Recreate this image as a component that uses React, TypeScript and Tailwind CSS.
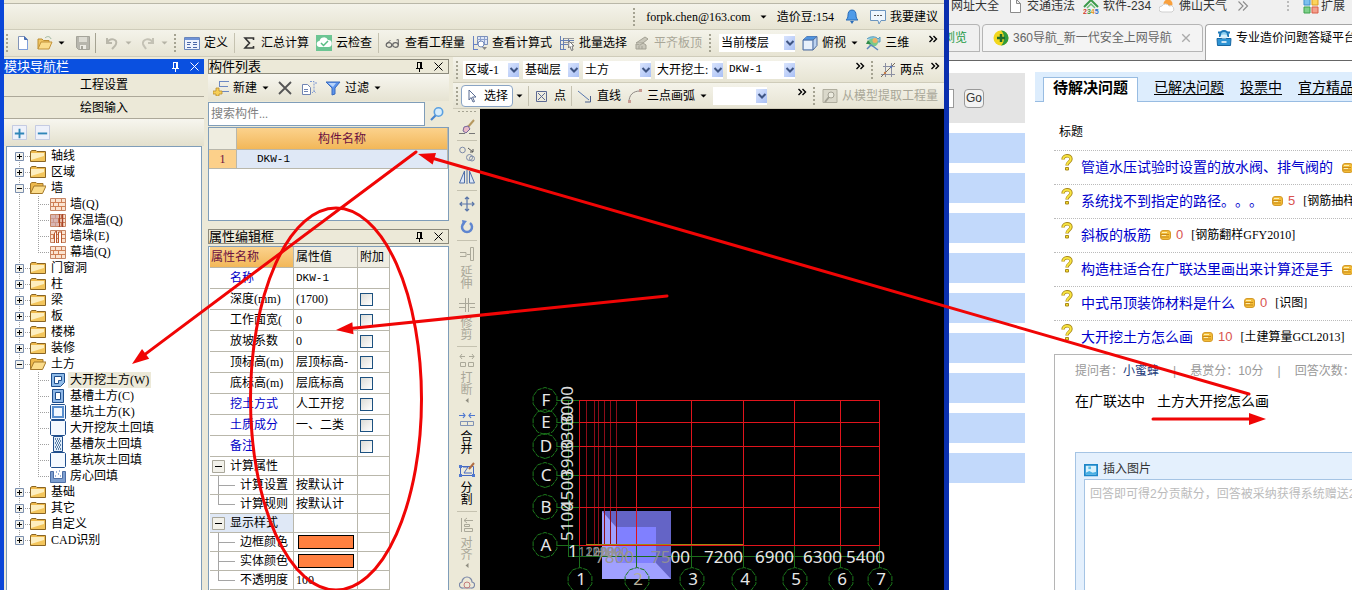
import React from "react"

type IconProps = { children: React.ReactNode; className?: string }

function Icon({ children, className = "h-4 w-4" }: IconProps) {
  return (
    <svg viewBox="0 0 16 16" fill="none" className={`shrink-0 ${className}`} aria-hidden="true">
      {children}
    </svg>
  )
}

/* ---------- Small shared pieces ---------- */

function Caret({ muted = false }: { muted?: boolean }) {
  return (
    <svg viewBox="0 0 8 8" className="h-2 w-2 shrink-0" aria-hidden="true">
      <path d="M1.500 2.500h6l-3 3z" fill={muted ? "#b5b3a6" : "#000"} />
    </svg>
  )
}

function Grip() {
  return (
    <svg viewBox="0 0 3 18" className="h-[18px] w-[3px] shrink-0" aria-hidden="true">
      {[0, 4, 8, 12, 16].map((y) => (
        <rect key={y} x="0" y={y} width="2" height="2" fill="#a5a392" />
      ))}
    </svg>
  )
}

function Sep() {
  return <span className="-mx-px h-5 w-px shrink-0 bg-[#c5c2b0]" />
}

function More() {
  return (
    <button type="button" aria-label="更多" className="-mt-2 shrink-0">
      <svg viewBox="0 0 10 8" className="h-2 w-[10px]" fill="none" aria-hidden="true">
        <path d="M1.5 1l3 3-3 3M5.5 1l3 3-3 3" stroke="#000" strokeWidth="1.4" />
      </svg>
    </button>
  )
}

type ToolProps = { icon: React.ReactNode; label: string; disabled?: boolean; caret?: boolean }

function Tool({ icon, label, disabled, caret }: ToolProps) {
  return (
    <button type="button" disabled={disabled} className="flex shrink-0 items-center gap-1 disabled:text-[#a9a798]">
      {icon}
      <span>{label}</span>
      {caret && <Caret />}
    </button>
  )
}

function Combo({ label, value, className }: { label: string; value: string; className: string }) {
  return (
    <div className={`relative h-[18px] shrink-0 bg-white ${className}`}>
      <select aria-label={label} className="h-full w-full appearance-none truncate pr-3 pl-0.5 outline-none">
        <option>{value}</option>
      </select>
      <span className="pointer-events-none absolute inset-y-0.5 right-0 flex w-[11px] items-center justify-center bg-gradient-to-br from-[#d9e4fd] to-[#a9c0f5]">
        <svg viewBox="0 0 10 8" className="h-2 w-[10px]" fill="none" aria-hidden="true">
          <path d="M1.5 2l3.5 3.5L8.500 2" stroke="#3f5583" strokeWidth="2" />
        </svg>
      </span>
    </div>
  )
}

/* ---------- Icons ---------- */

const newIcon = (
  <Icon>
    <path d="M3.500 1.500h6l3 3v10h-9z" fill="#fff" stroke="#8294b8" />
    <path d="M9.500 1.500v3h3" fill="#4472c4" stroke="#4a6cab" />
    <path d="M12.500 6v8.500H5" stroke="#7f9fdc" />
  </Icon>
)
const openIcon = (
  <Icon>
    <path d="M1 14V4h4l1.500 1.500H12V8" fill="#f1c663" stroke="#bd8e32" />
    <path d="M1 14l3-7h11l-3 7z" fill="#fbdd8c" stroke="#c3933a" />
    <path d="M8 3c2-2 5-2 6 1" stroke="#9db6a0" />
  </Icon>
)
const saveIcon = (
  <Icon>
    <path d="M1.500 1.500h13v13h-11l-2-2z" fill="#b7b6ad" stroke="#a5a49a" />
    <path d="M4 2h8v5H4z" fill="#dddcd3" />
    <path d="M5 10h6v4H5z" fill="#ecebe4" />
    <path d="M6 11h2v3H6z" fill="#a5a49a" />
  </Icon>
)
const undoIcon = (
  <Icon>
    <path d="M3 3v5h5" stroke="#bab8ab" strokeWidth="2" />
    <path d="M3 8c3-6 11-4 9 1-.5 2-2 3-4 5" stroke="#bab8ab" strokeWidth="2" />
  </Icon>
)
const redoIcon = (
  <Icon>
    <path d="M13 3v5H8" stroke="#c4c2b5" strokeWidth="2" />
    <path d="M13 8C10 2 2 4 3 9c.5 2 2 3 3 5" stroke="#c4c2b5" strokeWidth="2" />
  </Icon>
)
const defineIcon = (
  <Icon>
    <path d="M.5 2.500h15v12H.500z" fill="#eef3fd" stroke="#6a86bb" />
    <path d="M1 3h14v2H1z" fill="#6f93d6" />
    <path d="M3 7.500h4M3 9.500h3M3 12.500h4M9 7.500h4M9 9.500h4M9 12.500h4" stroke="#4b68a8" />
  </Icon>
)
const sigmaIcon = (
  <Icon>
    <path d="M12.500 5V3H4l4.500 5L4 13h8.500v-2" stroke="#333" strokeWidth="1.600" />
  </Icon>
)
const cloudCheckIcon = (
  <Icon>
    <path d="M0 0h16v16H0z" fill="#6cc593" />
    <path d="M4 12a3 3 0 01-.5-6A4.500 4.500 0 0112 5a3.500 3.500 0 01.5 7z" fill="#fff" />
    <path d="M5 8l2.500 2.500L12 6" stroke="#58bd83" strokeWidth="1.500" />
  </Icon>
)
const glassesIcon = (
  <Icon>
    <ellipse cx="4" cy="10" rx="2.800" ry="2.300" stroke="#666" strokeWidth="1.200" />
    <ellipse cx="10.500" cy="10" rx="2.800" ry="2.300" stroke="#666" strokeWidth="1.200" />
    <path d="M1.500 9l4-4M13.300 10V4.500L11.500 5" stroke="#666" />
  </Icon>
)
const formulaIcon = (
  <Icon>
    <path d="M1.500 1v14M1 9.500h5M1 14.500h5" stroke="#6681c5" />
    <path d="M5.500 1.500h10v8h-10z" fill="#dfe7f7" stroke="#7b8fb9" />
    <path d="M5 4.500h10M8.500 2v7M12.500 2v7" stroke="#8da1cd" />
    <circle cx="9" cy="9" r="3" fill="#fff" stroke="#7189bb" />
    <path d="M10 12h5l-2.500 3z" fill="#888" />
  </Icon>
)
const batchIcon = (
  <Icon>
    <path d="M1.500 1v14M4.500 3v12M1 14.500h6M1 5.500h14M1 9.500h8M9.500 3v5" stroke="#6681b5" />
    <path d="M5 3.500h10M5 7.500h10" stroke="#9a9a9a" />
    <path d="M10 6l5 5h-2l1 4-1.500.5-1.500-4-1.500 1.500z" fill="#fff" stroke="#777" />
  </Icon>
)
const slabIcon = (
  <Icon>
    <path d="M2 8l9-6 3 2-5 4zM2 9v5h10v-4l-3-2-3 2zM5 11v3M8 11v3" fill="#c9c7ba" stroke="#a3a194" />
  </Icon>
)
const cubeIcon = (
  <Icon>
    <path d="M1 5l4-3.500h10v9l-4 4.500H1z" fill="#bcd2ef" stroke="#4f6d9e" />
    <path d="M1 5l4-3.500h10L11 5z" fill="#4e93df" />
    <path d="M1 5h10v10M11 5l4-3.500" stroke="#4f6d9e" />
    <path d="M2 6h8v8H2z" fill="#e8f0fb" />
  </Icon>
)
const orbitIcon = (
  <Icon>
    <path d="M2 4c3-3 9-3 11 0l2-2v5h-4" fill="#8cc7e0" stroke="#5a9dbd" />
    <ellipse cx="8" cy="7.500" rx="5" ry="4" fill="#7cc98a" />
    <circle cx="10" cy="5.500" r="2.500" fill="#efb166" />
    <path d="M1 9l2-4 3 4z" fill="#2f8b4a" />
    <path d="M2 14l4-4 3 2 4 3" stroke="#5a86c0" strokeWidth="1.500" />
  </Icon>
)
const bellIcon = (
  <Icon>
    <path d="M8 1c3 0 4 2.500 4 5 0 3 1 4 2 5H2c1-1 2-2 2-5 0-2.500 1-5 4-5z" fill="#4f9be8" stroke="#2a6db8" />
    <path d="M6 12h4l-2 3z" fill="#2a6db8" />
  </Icon>
)
const chatIcon = (
  <Icon>
    <path d="M.5 1.500h15v10H11L9 15l-1-3.500H.500z" fill="#eef6fd" stroke="#6b95bf" />
    <path d="M4 6.500h8" stroke="#555" strokeDasharray="2 1" />
  </Icon>
)
const twoPointIcon = (
  <Icon>
    <path d="M1 12.500h14M3 4.500h12M5.500 1v14M11.500 1v14" stroke="#8b8fa2" />
    <path d="M1 15L15 1" stroke="#7a6b5a" />
    <circle cx="5" cy="11" r="1.200" fill="#c67c47" />
    <circle cx="11" cy="5" r="1.200" fill="#5877b5" />
  </Icon>
)
const pointIcon = (
  <Icon>
    <path d="M2.500 3.500h10v10h-10zM4 5l7 7M11 5l-7 7" stroke="#5d6a94" />
  </Icon>
)
const lineIcon = (
  <Icon>
    <path d="M1 3l11 9" stroke="#5878b0" />
    <path d="M13.500 8v6H8" stroke="#4a5e8a" />
  </Icon>
)
const arcIcon = (
  <Icon>
    <path d="M2 14C2 7 6 3 13 3" stroke="#8d8783" />
    <path d="M1 12h3v3H1zM12 1h3v3h-3z" fill="#c89b92" />
  </Icon>
)
const extractIcon = (
  <Icon>
    <path d="M1 1.500h14v13H1z" stroke="#b0ae9f" fill="#dad8ca" />
    <circle cx="9" cy="7" r="3" fill="#ecebdf" stroke="#a3a194" />
    <path d="M7 9l-4 5" stroke="#a3a194" strokeWidth="2" />
  </Icon>
)
const createIcon = (
  <Icon>
    <path d="M6 1.500h10M6 6.500h9M8 11.500h8M6.500 1v6" stroke="#6c88c2" />
    <path d="M3 8h3v3h3v3H6v2H3v-2H0v-3h3z" fill="#f7cf57" stroke="#b98d2e" strokeWidth=".8" />
  </Icon>
)
const deleteIcon = (
  <Icon>
    <path d="M2 2l12 12M14 2L2 14" stroke="#555" strokeWidth="1.800" />
  </Icon>
)
const copyDocIcon = (
  <Icon>
    <path d="M1.500 4.500h5l3 3v7h-8z" fill="#fff" stroke="#7085b3" />
    <path d="M3 9.500h4M3 11.500h4" stroke="#7085b3" />
    <path d="M9 1.500h4v10M11 13l2-2 2 2M14 3h2" stroke="#7c98d3" strokeDasharray="2 1" />
  </Icon>
)
const filterIcon = (
  <Icon>
    <path d="M1 2h14L10 8v6l-3 1V8z" fill="#5b93ec" stroke="#3a6bbd" />
    <path d="M3 3h8L8 7z" fill="#b8d4fa" />
  </Icon>
)
const searchIcon = (
  <Icon>
    <circle cx="9.500" cy="6" r="4.200" fill="#d7edfb" stroke="#5ba0e0" strokeWidth="1.600" />
    <path d="M6.500 9.500L2 14" stroke="#4584cf" strokeWidth="2.200" />
  </Icon>
)
const pictureIcon = (
  <Icon className="h-[14px] w-[14px]">
    <path d="M1 2h14v12H1z" fill="#d8f1fc" stroke="#1c86c9" strokeWidth="2" />
    <path d="M2 11l4-2 4 2 4-1v3H2z" fill="#48b0e4" />
    <path d="M5 4h3v3H5z" fill="#5cc0ea" />
  </Icon>
)

/* ---------- Module tree ---------- */

const folderIcon = (
  <Icon>
    <path d="M.5 3.500L2 2.500h4l1 1h8.500v10H.500z" fill="#eeb94d" stroke="#8a6524" />
    <path d="M1 5h14v8H1z" fill="#f3c55c" />
    <path d="M1 5h13v3L1 12z" fill="#fdeebf" />
  </Icon>
)
const folderOpenIcon = (
  <Icon>
    <path d="M.5 13.500v-10L2 2.500h4l1 1h6V6" fill="#eeb94d" stroke="#a4782a" />
    <path d="M.5 13.500L4 6h12l-3.500 7.500z" fill="#fbdc8b" stroke="#a4782a" />
  </Icon>
)
const brick = (
  <>
    <path d="M.5 2.500h15v12H.500z" fill="#fbe3d0" stroke="#c58565" />
    <path d="M1 6.500h14M1 10.500h14M5.500 3v4M11.500 3v4M8.500 7v4M3.500 7v4M5.500 11v3M11.500 11v3" stroke="#cf7f55" />
  </>
)
const frame = <path d="M1.500.500h13l1 1v13l-1 1h-13l-1-1v-13z" fill="#f4f9ff" stroke="#1f4e8c" />

const leafIcons: Record<string, React.ReactNode> = {
  brick: <Icon>{brick}</Icon>,
  insulated: (
    <Icon>
      {brick}
      <path d="M1 3h7v11H1z" fill="#c9a2a6" fillOpacity=".7" />
      <path d="M9.500 2v13M12.500 2v13" stroke="#a8452c" strokeWidth="1.500" />
    </Icon>
  ),
  pier: (
    <Icon>
      {brick}
      <path d="M4.500 15V5l2-2v12M8.500 15V4h3v11" fill="#fff" stroke="#b8582f" />
    </Icon>
  ),
  excavate: (
    <Icon>
      <path d="M1.500 1.500h13v9l-4 4h-9z" fill="#8fbbe8" stroke="#1f4e8c" />
      <path d="M4.500 4.500h7v4h-3v3h-4z" fill="#fff" stroke="#1f4e8c" />
    </Icon>
  ),
  trench: (
    <Icon>
      <path d="M2.500 1.500h11v13h-11z" fill="#8fb7e6" stroke="#1f4e8c" />
      <path d="M5.500 4.500h5v7h-5z" fill="#fff" stroke="#1f4e8c" />
    </Icon>
  ),
  pit: (
    <Icon>
      {frame}
      <path d="M3 3h10v10H3z" stroke="#5a8fce" strokeWidth="2" />
    </Icon>
  ),
  backfill: <Icon>{frame}</Icon>,
  trenchFill: (
    <Icon>
      <path d="M3.500.500h9v15h-9z" fill="#e2eefb" stroke="#1f4e8c" />
      <path d="M5 3h6M6 5h6M5 7h6M6 9h6M5 11h6M6 13h6" stroke="#35608f" strokeWidth="1.500" strokeDasharray="1 1" />
    </Icon>
  ),
  roomFill: (
    <Icon>
      <path d="M.5 3.500h3v7h9v-7h3v11H.500z" fill="#7d9fd0" stroke="#4d6ea5" />
      <path d="M5 8h1M8 6h1M10 8h1M6 4h1M9 3h1" stroke="#7d9fd0" strokeWidth="1.500" />
    </Icon>
  ),
}

type Leaf = { label: string; icon: string; active?: boolean }
type Branch = { label: string; children?: Leaf[] }

const tree: Branch[] = [
  { label: "轴线" },
  { label: "区域" },
  {
    label: "墙",
    children: [
      { label: "墙(Q)", icon: "brick" },
      { label: "保温墙(Q)", icon: "insulated" },
      { label: "墙垛(E)", icon: "pier" },
      { label: "幕墙(Q)", icon: "brick" },
    ],
  },
  { label: "门窗洞" },
  { label: "柱" },
  { label: "梁" },
  { label: "板" },
  { label: "楼梯" },
  { label: "装修" },
  {
    label: "土方",
    children: [
      { label: "大开挖土方(W)", icon: "excavate", active: true },
      { label: "基槽土方(C)", icon: "trench" },
      { label: "基坑土方(K)", icon: "pit" },
      { label: "大开挖灰土回填", icon: "backfill" },
      { label: "基槽灰土回填", icon: "trenchFill" },
      { label: "基坑灰土回填", icon: "backfill" },
      { label: "房心回填", icon: "roomFill" },
    ],
  },
  { label: "基础" },
  { label: "其它" },
  { label: "自定义" },
  { label: "CAD识别" },
]

function BranchGuide({ open, first, last }: { open: boolean; first: boolean; last: boolean }) {
  return (
    <svg viewBox="0 0 23 16" className="h-4 w-[23px] shrink-0" fill="none" aria-hidden="true">
      <path d={`M12.500 ${first ? 8 : 0}V${last ? 8 : 16}M12 8.500h11`} stroke="#a0a0a0" strokeDasharray="1 1" />
      <path d="M8.500 4.500h8v8h-8z" fill="#f3f2ec" stroke="#7b8fae" />
      <path d={open ? "M10 8.500h5" : "M10 8.500h5M12.500 6v5"} stroke="#000" />
    </svg>
  )
}

function LeafGuide({ last }: { last: boolean }) {
  return (
    <svg viewBox="0 0 43 16" className="h-4 w-[43px] shrink-0" fill="none" aria-hidden="true">
      <path d={`M12.500 0V16M31.500 0V${last ? 8 : 16}M31 8.500h12`} stroke="#a0a0a0" strokeDasharray="1 1" />
    </svg>
  )
}

function PinClose() {
  return (
    <span className="ml-auto flex items-center gap-2 pr-1">
      <button type="button" aria-label="固定">
        <svg viewBox="0 0 11 11" className="h-[11px] w-[11px]" fill="none" aria-hidden="true">
          <path d="M3 1.500h5M3.500 1v6M7.500 1v6M6.500 1v6M2 7.500h7M5.500 8v3" stroke="currentColor" />
        </svg>
      </button>
      <button type="button" aria-label="关闭">
        <svg viewBox="0 0 11 11" className="h-[11px] w-[11px]" fill="none" aria-hidden="true">
          <path d="M1.500 1.500l8 8M9.500 1.500l-8 8" stroke="currentColor" />
        </svg>
      </button>
    </span>
  )
}

function ModuleDock() {
  return (
    <aside className="flex w-[200px] shrink-0 flex-col pt-0.5">
      <div className="flex h-[15px] shrink-0 items-center bg-[#0a50e0] text-[13px] text-white">
        模块导航栏
        <PinClose />
      </div>
      <button type="button" className="h-[23px] shrink-0 border-b border-[#aca899] bg-[#ece9d8]">
        工程设置
      </button>
      <button type="button" className="h-[22px] shrink-0 border-b border-[#aca899] bg-[#ece9d8]">
        绘图输入
      </button>
      <div className="flex h-[27px] shrink-0 items-center gap-2 bg-gradient-to-b from-[#f7f6ef] to-[#e3e0cd] pl-2">
        <button type="button" aria-label="全部展开">
          <Icon className="h-[15px] w-[15px]">
            <path d="M.5.500h15v15H.500z" fill="#eef1fa" stroke="#c0c8e0" />
            <path d="M3 9h10M8 4v10" stroke="#2f86b8" strokeWidth="2" />
          </Icon>
        </button>
        <button type="button" aria-label="全部折叠">
          <Icon className="h-[15px] w-[15px]">
            <path d="M.5.500h15v15H.500z" fill="#eef1fa" stroke="#c0c8e0" />
            <path d="M3 9h10" stroke="#2f86b8" strokeWidth="2" />
          </Icon>
        </button>
      </div>
      <ul className="mr-0.5 ml-0.5 min-h-0 flex-1 overflow-hidden border border-b-0 border-[#7f9db9] bg-white pt-px">
        {tree.map((branch, i) => (
          <li key={branch.label}>
            <button type="button" className="flex h-4 items-center">
              <BranchGuide open={!!branch.children} first={i === 0} last={i === tree.length - 1} />
              {branch.children ? folderOpenIcon : folderIcon}
              <span className="pl-[5px]">{branch.label}</span>
            </button>
            {branch.children && (
              <ul>
                {branch.children.map((leaf, j) => (
                  <li key={leaf.label}>
                    <button type="button" className="flex h-4 items-center">
                      <LeafGuide last={j === branch.children!.length - 1} />
                      {leafIcons[leaf.icon]}
                      <span className={leaf.active ? "ml-0.5 bg-[#ece9d8] px-0.5" : "ml-0.5 px-0.5"}>{leaf.label}</span>
                    </button>
                  </li>
                ))}
              </ul>
            )}
          </li>
        ))}
      </ul>
    </aside>
  )
}

/* ---------- Component list and property editor ---------- */

type Prop = { name: string; value?: string; check?: boolean; blue?: boolean }

const props: Prop[] = [
  { name: "名称", value: "DKW-1", blue: true },
  { name: "深度(mm)", value: "(1700)", check: true },
  { name: "工作面宽(", value: "0", check: true },
  { name: "放坡系数", value: "0", check: true },
  { name: "顶标高(m)", value: "层顶标高-", check: true },
  { name: "底标高(m)", value: "层底标高", check: true },
  { name: "挖土方式", value: "人工开挖", check: true, blue: true },
  { name: "土质成分", value: "一、二类", check: true, blue: true },
  { name: "备注", check: true, blue: true },
]

const groups = [
  {
    title: "计算属性",
    rows: [
      { name: "计算设置", value: "按默认计" },
      { name: "计算规则", value: "按默认计" },
    ],
  },
  {
    title: "显示样式",
    active: true,
    rows: [
      { name: "边框颜色", color: true },
      { name: "实体颜色", color: true },
      { name: "不透明度", value: "100" },
    ],
  },
]

const cell = "overflow-hidden border-r border-b border-[#b9b7ab] p-0 font-normal whitespace-nowrap"

function DockTitle({ children }: { children: React.ReactNode }) {
  return (
    <div className="flex h-[15px] shrink-0 items-center border border-[#8c8a7c] bg-[#ece9d8] text-[13px]">
      {children}
      <PinClose />
    </div>
  )
}

function ComponentDock() {
  return (
    <aside className="flex w-[241px] shrink-0 flex-col pt-0.5">
      <DockTitle>构件列表</DockTitle>
      <div className="flex h-[27px] shrink-0 items-center gap-2 bg-gradient-to-b from-[#f7f6ef] to-[#e6e3d2] pl-[5px]">
        <Tool icon={createIcon} label="新建" caret />
        <button type="button" aria-label="删除">{deleteIcon}</button>
        <button type="button" aria-label="复制">{copyDocIcon}</button>
        <Tool icon={filterIcon} label="过滤" caret />
      </div>
      <div className="flex h-[26px] shrink-0 items-center">
        <input
          type="text"
          aria-label="搜索构件"
          placeholder="搜索构件..."
          className="h-6 min-w-0 flex-1 border border-[#7f9db9] bg-white px-0.5 outline-none placeholder:text-[#808080]"
        />
        <button type="button" aria-label="搜索" className="flex w-6 justify-center">{searchIcon}</button>
      </div>
      <div className="h-[94px] shrink-0 border border-[#7f9db9] bg-white">
        <table className="w-full table-fixed border-separate border-spacing-0">
          <thead>
            <tr className="h-[22px]">
              <th className={`w-7 bg-[#efede0] ${cell}`}></th>
              <th className={`bg-gradient-to-b from-[#fbd28c] to-[#f2b758] text-[#6b1040] ${cell}`}>构件名称</th>
            </tr>
          </thead>
          <tbody>
            <tr className="h-[19px]">
              <td className={`bg-[#fcd08a] text-center text-[#6b1040] ${cell}`}>1</td>
              <td className={`bg-[#dfe8f6] pl-5! font-["Liberation_Mono"] text-[11px] ${cell}`}>DKW-1</td>
            </tr>
          </tbody>
        </table>
      </div>
      <div className="mt-2 flex min-h-0 flex-1 flex-col">
        <DockTitle>属性编辑框</DockTitle>
        <div className="mt-0.5 min-h-0 flex-1 overflow-hidden border border-b-0 border-[#7f9db9] bg-white pl-px">
          <table className="w-[180px] table-fixed border-separate border-spacing-0">
            <colgroup>
              <col className="w-[84px]" />
              <col className="w-16" />
              <col className="w-8" />
            </colgroup>
            <thead>
              <tr className="h-[21px] text-left">
                <th className={`bg-gradient-to-b from-[#fbd28c] to-[#f2b758] pl-px! text-[#6b1040] ${cell}`}>属性名称</th>
                <th className={`bg-[#efede2] pl-0.5! ${cell}`}>属性值</th>
                <th className={`bg-[#efede2] pl-0.5! ${cell}`}>附加</th>
              </tr>
            </thead>
            <tbody>
              {props.map((p) => (
                <tr key={p.name} className="h-[21px]">
                  <td className={`pl-5! ${p.blue ? "text-[#0000c8]" : ""} ${cell}`}>{p.name}</td>
                  <td className={`pl-0.5! ${p.value === "DKW-1" ? 'font-["Liberation_Mono"] text-[11px]' : ""} ${cell}`}>
                    {p.value}
                  </td>
                  <td className={`pl-0.5! ${cell}`}>
                    {p.check && (
                      <input
                        type="checkbox"
                        aria-label={`附加 ${p.name}`}
                        className="block h-[13px] w-[13px] appearance-none border border-[#1c5180] bg-gradient-to-br from-[#dcdcd7] to-white"
                      />
                    )}
                  </td>
                </tr>
              ))}
              {groups.map((g) => (
                <React.Fragment key={g.title}>
                  <tr className="h-[19px]">
                    <td className={`${g.active ? "bg-[#dfe8f6]" : ""} ${cell}`}>
                      <button type="button" className="flex h-[18px] items-center gap-[5px] pl-0.5">
                        <svg viewBox="0 0 13 13" className="h-[13px] w-[13px]" fill="none" aria-hidden="true">
                          <path d="M.5.500h12v12H.500z" fill="#f2f1ea" stroke="#a9a79a" />
                          <path d="M3 6.500h7" stroke="#000" />
                        </svg>
                        {g.title}
                      </button>
                    </td>
                    <td className={cell}></td>
                    <td className={cell}></td>
                  </tr>
                  {g.rows.map((r, i) => (
                    <tr key={r.name} className="h-[19px]">
                      <td className={cell}>
                        <span className="flex h-[18px] items-center">
                          <svg viewBox="0 0 30 18" className="h-[18px] w-[30px] shrink-0" fill="none" aria-hidden="true">
                            <path d={`M8.500 0V${i === g.rows.length - 1 ? 9 : 18}M8 9.500h17`} stroke="#a5a5a5" />
                          </svg>
                          {r.name}
                        </span>
                      </td>
                      <td className={`pl-0.5! ${cell}`}>
                        {"color" in r ? (
                          <button
                            type="button"
                            aria-label={r.name}
                            className="ml-0.5 block h-3.5 w-14 border border-black bg-[#ff8040]"
                          />
                        ) : (
                          (r as { value: string }).value
                        )}
                      </td>
                      <td className={cell}></td>
                    </tr>
                  ))}
                </React.Fragment>
              ))}
            </tbody>
          </table>
        </div>
      </div>
    </aside>
  )
}

/* ---------- Vertical edit strip ---------- */

function StripTool({ icon, label, disabled, caret }: { icon: React.ReactNode; label: string; disabled?: boolean; caret?: boolean }) {
  return (
    <button type="button" disabled={disabled} className="flex shrink-0 flex-col items-center disabled:text-[#a9a798]">
      {icon}
      <span className="mt-1 w-3 leading-3 whitespace-normal break-all">{label}</span>
      {caret && (
        <svg viewBox="0 0 8 8" className="h-2 w-2" aria-hidden="true">
          <path d="M5.500 2v5L2.500 4.500z" fill="#8f8d80" />
        </svg>
      )}
    </button>
  )
}

function StripSep() {
  return <span className="-my-0.5 h-px w-5 shrink-0 bg-[#c5c2b0]" />
}

function EditStrip() {
  return (
    <div className="flex w-[27px] shrink-0 flex-col items-center gap-[7px] overflow-hidden bg-[#ece9d8] pt-0.5">
      <svg viewBox="0 0 18 2" className="h-px w-[18px] shrink-0" preserveAspectRatio="none" aria-hidden="true">
        {[0, 4, 8, 12, 16].map((x) => (
          <rect key={x} x={x} y="0" width="2" height="2" fill="#a5a392" />
        ))}
      </svg>
      <button type="button" aria-label="格式刷">
        <Icon>
          <path d="M15 1L9 8" stroke="#b5985f" strokeWidth="2" />
          <path d="M5 8l4-1 2 3-4 4-3-2z" fill="#e9b9c6" stroke="#74659a" />
          <path d="M0 14.500h6M10 14.500h6" stroke="#777" />
        </Icon>
      </button>
      <StripSep />
      <button type="button" aria-label="复制图元">
        <Icon>
          <circle cx="3.500" cy="4" r="2.800" stroke="#7c89a8" />
          <circle cx="10.500" cy="11.500" r="3" stroke="#7c89a8" />
          <circle cx="13" cy="12.500" r="2.500" stroke="#7c89a8" />
          <path d="M9 2l5 4M14 3v3h-3" stroke="#555" />
        </Icon>
      </button>
      <button type="button" aria-label="镜像">
        <Icon>
          <path d="M5.500 2v12H.500zM10.500 2v12h5z" fill="#dde7f7" stroke="#4f6fa8" />
          <path d="M8 1v14" stroke="#4f6fa8" />
        </Icon>
      </button>
      <StripSep />
      <button type="button" aria-label="移动">
        <Icon>
          <path d="M8 1v14M1 8h14M6 3l2-2 2 2M6 13l2 2 2-2M3 6L1 8l2 2M13 6l2 2-2 2" stroke="#5975a8" strokeWidth="1.200" />
        </Icon>
      </button>
      <button type="button" aria-label="旋转">
        <Icon>
          <path d="M5 4a5 5 0 106 0" stroke="#5f86d0" strokeWidth="2.500" />
          <path d="M3 1l5 1-4 5z" fill="#5f86d0" />
        </Icon>
      </button>
      <StripSep />
      <StripTool
        disabled
        label="延伸"
        icon={
          <Icon>
            <path d="M1 6.500h6v4H1M8 8.500h3M11.500 1.500h3v13h-3z" stroke="#aaa899" />
          </Icon>
        }
      />
      <StripTool
        disabled
        label="修剪"
        icon={
          <Icon>
            <path d="M0 6.500h16M0 10.500h6M11 10.500h5M6.500 1v14M9.500 1v14" stroke="#aaa899" />
          </Icon>
        }
      />
      <StripSep />
      <StripTool
        disabled
        caret
        label="打断"
        icon={
          <Icon>
            <path d="M1 4.500h5M10 4.500h5M3 2L1 4.500 3 7M13 2l2 2.500L13 7M1.500 10.500h5v4h-5zM9.500 10.500h5v4h-5z" stroke="#aaa899" />
          </Icon>
        }
      />
      <StripTool
        label="合并"
        icon={
          <Icon>
            <path d="M0 4.500h6M10 4.500h6M4 2l2 2.500L4 7M12 2l-2 2.500L12 7" stroke="#4d77d0" strokeWidth="1.200" />
            <path d="M1.500 10.500h13v4h-13zM8.500 10v4" stroke="#8092b5" />
          </Icon>
        }
      />
      <StripTool
        label="分割"
        icon={
          <Icon>
            <path d="M1.500 4.500h13v9h-13zM4 5h5l-4 6h8" stroke="#4468c0" />
            <path d="M0 3h3v3H0zM0 12h3v3H0zM13 12h3v3h-3z" fill="#4d77d0" />
            <path d="M15 1l-5 6" stroke="#b06c42" strokeWidth="2" />
          </Icon>
        }
      />
      <StripSep />
      <StripTool
        disabled
        caret
        label="对齐"
        icon={
          <Icon>
            <path d="M2.500 1v14M5 3.500h9M8 1L5 3.500 8 6M5.500 7.500h5v2h-5zM5.500 11.500h8v3h-8z" stroke="#aaa899" />
          </Icon>
        }
      />
      <button type="button" aria-label="云线">
        <Icon>
          <path d="M4 12a3 3 0 01-1-6 5 5 0 0110 0 3 3 0 01-1 6z" stroke="#7c89a8" strokeWidth="1.200" />
          <circle cx="8" cy="9" r="3" stroke="#c47c7c" />
        </Icon>
      </button>
    </div>
  )
}

/* ---------- Drawing area ---------- */

const axesX = [579, 636, 691, 743, 794, 840, 879]
const thinX = [586, 594, 598, 604, 610, 616]
const axesY = [
  { y: 400, name: "F" },
  { y: 422, name: "E" },
  { y: 446, name: "D" },
  { y: 475, name: "C" },
  { y: 507, name: "B" },
  { y: 545, name: "A" },
]
const spansX = [
  { x: 651, text: "7500" },
  { x: 704, text: "7200" },
  { x: 755, text: "6900" },
  { x: 803, text: "6300" },
  { x: 846, text: "5400" },
]
const spansY = [
  { y: 541, text: "5100" },
  { y: 510, text: "4500" },
  { y: 478, text: "3900" },
  { y: 451, text: "3300" },
  { y: 425, text: "3000" },
]

function bubble(cx: number, cy: number) {
  const r = 12.5
  return Array.from({ length: 10 }, (_, i) => {
    const a = (Math.PI / 5) * i + Math.PI / 2
    return `${cx + r * Math.cos(a)},${cy + r * Math.sin(a)}`
  }).join(" ")
}

function Drawing() {
  return (
    <div className="min-w-0 flex-1 overflow-hidden bg-black">
      <svg viewBox="480 109 464 481" className="h-full w-full font-['Noto_Sans'] text-[17px]" fill="none">
        <path d="M602 511h69v68h-69z" fill="#6464c6" />
        <path d="M602 511l14 16v36h40l15 16h-69z" fill="#a0a0ff" />
        <path d="M616 527h40v36h-40z" fill="#8080ff" />
        {thinX.map((x) => (
          <path key={x} d={`M${x}.5 400v145`} stroke="#8c0c18" />
        ))}
        {axesX.map((x) => (
          <g key={x}>
            <path d={`M${x}.5 545v22`} stroke="#1c6e1c" />
            <path d={`M${x}.5 400v145`} stroke="#e0141c" />
          </g>
        ))}
        {axesY.map(({ y }) => (
          <g key={y}>
            <path d={`M557 ${y}.5h22`} stroke="#1c6e1c" />
            <path d={`M579 ${y}.5h301`} stroke="#e0141c" />
          </g>
        ))}
        <path d="M568.5 400v156M568 556.500h312" stroke="#1c6e1c" />
        <path d="M586 544.500h157" stroke="#a08a10" />
        {axesY.map(({ y, name }) => (
          <g key={name}>
            <polygon points={bubble(545, y)} stroke="#1c7a1c" strokeDasharray="5 1" />
            <text x="546" y={y + 6} textAnchor="middle" fill="#e8e8e8">{name}</text>
          </g>
        ))}
        {axesX.map((x, i) => (
          <g key={x}>
            <polygon points={bubble(x + 1, 580)} stroke="#1c7a1c" strokeDasharray="5 1" />
            <text x={x + 2} y="585" textAnchor="middle" fill={i === 1 ? "#b5b09a" : "#e8e8e8"}>{i + 1}</text>
          </g>
        ))}
        {spansY.map(({ y, text }) => (
          <text key={text} x="0" y="0" transform={`translate(573 ${y}) rotate(-90)`} fill="#dcdcdc">{text}</text>
        ))}
        <text x="568" y="557" fill="#e8e8e8">1</text>
        {[578, 585, 592, 599].map((x) => (
          <text key={x} x={x} y="556" fontSize="13" fill="#8f8f8f">1200</text>
        ))}
        <text x="595" y="563" fill="#9a9690">7800</text>
        {spansX.map(({ x, text }) => (
          <text key={text} x={x} y="563" fill="#e8e8e8">
            {text === "7500" ? (
              <>
                <tspan fill="#8f8f96">75</tspan>00
              </>
            ) : (
              text
            )}
          </text>
        ))}
      </svg>
    </div>
  )
}

/* ---------- Modelling application window ---------- */

const bar = "flex shrink-0 items-center overflow-hidden border-b border-[#cfccba] bg-gradient-to-b from-[#f4f3ea] to-[#e7e4d3]"

function Modeller() {
  return (
    <section className='flex min-w-0 flex-col overflow-hidden border-r-[5px] border-l-4 border-r-[#0a2fae] border-l-[#0a46d8] bg-[#ece9d8] font-["Liberation_Serif","Noto_Sans_CJK_SC",sans-serif] text-xs'>
      <div className="h-1 shrink-0 border-b border-[#b9b7a8]" />
      <div className={`h-[26px] justify-end gap-[10px] pr-[6px] ${bar}`}>
        <Grip />
        <button type="button" className="flex items-center gap-2">
          forpk.chen@163.com
          <Caret />
        </button>
        <span>造价豆:154</span>
        <button type="button" aria-label="消息">{bellIcon}</button>
        <Tool icon={chatIcon} label="我要建议" />
      </div>
      <div className={`h-[27px] pr-[6px] pl-0.5 ${bar}`}>
        <Grip />
        <button type="button" aria-label="新建" className="ml-0.5 flex w-6 justify-center">{newIcon}</button>
        <button type="button" aria-label="打开" className="flex w-8 items-center gap-1 pl-0.5">{openIcon}<Caret /></button>
        <button type="button" aria-label="保存" disabled className="ml-1 flex w-6 justify-center">{saveIcon}</button>
        <span className="h-5 w-px bg-[#a5a392]" />
        <button type="button" aria-label="撤销" disabled className="ml-2 flex w-7 items-center gap-1">{undoIcon}<Caret muted /></button>
        <button type="button" aria-label="恢复" disabled className="mr-[6px] ml-2 flex w-7 items-center gap-1">{redoIcon}<Caret muted /></button>
        <div className="flex min-w-0 flex-1 items-center gap-[7px]">
          <Grip />
          <Tool icon={defineIcon} label="定义" />
          <Sep />
          <Tool icon={sigmaIcon} label="汇总计算" />
          <Tool icon={cloudCheckIcon} label="云检查" />
          <Sep />
          <Tool icon={glassesIcon} label="查看工程量" />
          <Tool icon={formulaIcon} label="查看计算式" />
          <Tool icon={batchIcon} label="批量选择" />
          <Tool icon={slabIcon} label="平齐板顶" disabled />
          <Grip />
          <Combo label="楼层范围" value="当前楼层" className="w-[76px]" />
          <Tool icon={cubeIcon} label="俯视" caret />
          <Tool icon={orbitIcon} label="三维" />
        </div>
        <More />
      </div>
      <div className="flex min-h-0 flex-1 gap-1">
        <ModuleDock />
        <ComponentDock />
        <div className="flex min-w-0 flex-1 flex-col">
          <div className={`h-[26px] gap-1 pr-1 pl-[3px] ${bar}`}>
            <Grip />
            <Combo label="区域" value="区域-1" className="w-14" />
            <Combo label="楼层" value="基础层" className="w-14" />
            <Combo label="构件大类" value="土方" className="w-[68px]" />
            <Combo label="构件类型" value="大开挖土:" className="w-[68px]" />
            <Combo label="构件" value="DKW-1" className='w-[68px] font-["Liberation_Mono"] text-[11px]' />
            <div className="ml-auto flex items-center gap-[6px]">
              <More />
              <Grip />
              <Tool icon={twoPointIcon} label="两点" />
              <More />
            </div>
          </div>
          <div className={`h-[26px] gap-[6px] pr-[6px] pl-[3px] ${bar}`}>
            <div className="flex items-center gap-0.5">
              <Grip />
              <button type="button" className="flex h-[22px] w-[52px] items-center gap-1 rounded-sm border border-[#8aa4c4] bg-white pl-0.5">
                <Icon>
                  <path d="M5 2l7 7H8.500l2 4.500-1.500.5-2-4.500L5 12z" fill="#fff" stroke="#5a6c92" />
                </Icon>
                选择
              </button>
              <Caret />
            </div>
            <Sep />
            <Tool icon={pointIcon} label="点" />
            <Sep />
            <Tool icon={lineIcon} label="直线" />
            <Tool icon={arcIcon} label="三点画弧" caret />
            <Combo label="绘制方式" value="" className="w-[54px]" />
            <div className="ml-auto flex items-center gap-[6px]">
              <More />
              <Grip />
              <Tool icon={extractIcon} label="从模型提取工程量" disabled />
            </div>
          </div>
          <div className="flex min-h-0 flex-1">
            <EditStrip />
            <Drawing />
          </div>
        </div>
      </div>
    </section>
  )
}

/* ---------- Browser window ---------- */

const questions = [
  { title: "管道水压试验时设置的放水阀、排气阀的", score: "", tag: "" },
  { title: "系统找不到指定的路径。。。", score: "5", tag: "[钢筋抽样GGJ2013]" },
  { title: "斜板的板筋", score: "0", tag: "[钢筋翻样GFY2010]" },
  { title: "构造柱适合在广联达里画出来计算还是手", score: "", tag: "" },
  { title: "中式吊顶装饰材料是什么", score: "0", tag: "[识图]" },
  { title: "大开挖土方怎么画", score: "10", tag: "[土建算量GCL2013]" },
]

function Coin() {
  return (
    <svg viewBox="0 0 11 10" className="mt-0.5 h-[10px] w-[11px] shrink-0" aria-hidden="true">
      <rect x=".5" y=".5" width="10" height="9" rx="2.500" fill="#f3bd38" stroke="#d39a2a" />
      <path d="M1 4.500h8M1 7h8" stroke="#c98a1b" />
      <path d="M2 2.500h5M2 5.500h4" stroke="#fdeeb0" />
    </svg>
  )
}

function Question() {
  return (
    <svg viewBox="0 0 12 17" className="mb-2 h-[17px] w-3 shrink-0" fill="none" aria-hidden="true">
      <path d="M2 5.500c0-5 8-5 8-.5 0 3-4 3-4 6.500" stroke="#a98a1c" strokeWidth="3.400" />
      <path d="M4.500 13.500h3v2.500h-3z" fill="#f7dc2e" stroke="#a98a1c" />
      <path d="M2.200 5.300c0-4.500 7.600-4.500 7.600-.3 0 3-3.800 3-3.800 6" stroke="#f9e540" strokeWidth="1.900" />
    </svg>
  )
}

function Browser() {
  return (
    <section className='flex min-w-0 flex-col overflow-hidden bg-white font-["Liberation_Sans","Noto_Sans_CJK_SC",sans-serif] text-xs whitespace-nowrap'>
      <div className="flex h-[60px] shrink-0 flex-col bg-[#f0f0f0]">
        <nav className="flex h-3 items-center pl-0.5 text-[#333]">
          <a href="#sites">网址大全</a>
          <a href="#traffic" className="ml-2 flex items-center gap-1">
            <Icon>
              <path d="M3.500 1.500h6l4 4v9h-10zM9.500 1.500v4h4" fill="#fff" stroke="#8b8b8b" />
            </Icon>
            交通违法
          </a>
          <a href="#soft" className="ml-2 flex items-center gap-1">
            <Icon>
              <path d="M1 9l7-7 7 7" stroke="#3d9a4b" strokeWidth="2" />
              <path d="M4 10l4-4 4 4" stroke="#6dbf77" strokeWidth="1.500" />
              <text x="0" y="16" fontSize="7" fontWeight="bold" fill="#d33c2e">
                2<tspan fill="#3d9a4b">3</tspan>
                <tspan fill="#e39a25">4</tspan>
                <tspan fill="#2f6fc4">5</tspan>
              </text>
            </Icon>
            软件-234
          </a>
          <a href="#weather" className="ml-2 flex items-center gap-1">
            <Icon>
              <circle cx="9" cy="6" r="4.500" fill="#f9a03c" />
              <path d="M3 14a3 3 0 010-6 4 4 0 017 0 3 3 0 013 6z" fill="#fff" stroke="#cfcfcf" />
            </Icon>
            佛山天气
          </a>
          <button type="button" aria-label="更多书签" className="ml-[10px]">
            <Icon className="h-3 w-3">
              <path d="M2 2l6 6-6 6M8 2l6 6-6 6" stroke="#8b8b8b" strokeWidth="1.500" />
            </Icon>
          </button>
          <span className="ml-[38px] flex shrink-0 flex-col gap-0.5">
            <i className="h-0.5 w-0.5 bg-[#bbb]" />
            <i className="h-0.5 w-0.5 bg-[#bbb]" />
            <i className="h-0.5 w-0.5 bg-[#bbb]" />
          </span>
          <button type="button" className="ml-[14px] flex shrink-0 items-center gap-0.5">
            <Icon>
              <path d="M1 1h6v6H1z" fill="#7cc0ee" stroke="#3f8fcf" />
              <path d="M9 1h6v6H9z" fill="#fbd45c" stroke="#dd9c1f" />
              <path d="M1 9h6v6H1z" fill="#7fd08a" stroke="#3da24d" />
              <path d="M9 9h6v6H9z" fill="#f4a08d" stroke="#d95c47" />
            </Icon>
            扩展
          </button>
        </nav>
        <div className="mt-3 flex min-h-0 flex-1 gap-0.5">
          <button type="button" className="flex h-7 w-[31px] shrink-0 items-center justify-end rounded-tr border-t border-r border-b border-[#b5b5b5] pr-3 text-[#1a9a45]">
            浏览
          </button>
          <div className="flex h-7 w-[221px] shrink-0 items-center gap-1 rounded-t border border-[#b5b5b5] bg-[#f4f4f4] px-[10px] text-[#666]">
            <Icon>
              <circle cx="8" cy="8" r="7.500" fill="#f2d71e" />
              <path d="M8 .500a7.500 7.500 0 010 15c4-3 4-12 0-15z" fill="#2f9b3f" />
              <path d="M8 4v8M4 8h8" stroke="#1f6d2c" strokeWidth="2.500" />
            </Icon>
            360导航_新一代安全上网导航
            <button type="button" aria-label="关闭标签" className="ml-auto">
              <Icon className="h-3 w-3">
                <path d="M3 3l10 10M13 3L3 13" stroke="#aaa" strokeWidth="1.800" />
              </Icon>
            </button>
          </div>
          <div className="flex min-w-0 flex-1 items-start gap-1 overflow-hidden rounded-tl border-t border-l border-[#a5a5a5] bg-white pt-[5px] pl-[10px]">
            <Icon>
              <path d="M4 7V5a4 4 0 018 0v2" fill="#8ed0f0" stroke="#1d78b8" strokeWidth="2" />
              <path d="M2 2.500h3M11 2.500h3" stroke="#1d78b8" strokeWidth="2" />
              <path d="M1 8.500h14l-.5 7h-13z" fill="#2e94d4" stroke="#1767a3" />
              <ellipse cx="8" cy="6.500" rx="3.500" ry="2" fill="#d6effb" />
              <path d="M5.500 12h5" stroke="#fff" strokeWidth="1.500" />
            </Icon>
            专业造价问题答疑平台
          </div>
        </div>
      </div>
      <div className="flex min-h-0 flex-1 gap-[10px] border-t border-[#666] pt-[11px]">
        <aside className="mt-px flex w-[76px] shrink-0 flex-col gap-[10px]">
          <form className="flex h-[50px] shrink-0 items-center gap-[10px] bg-[#e4e4e4]">
            <input type="text" aria-label="站内搜索" className="h-[19px] w-[5px] border border-l-0 border-[#999] bg-white" />
            <button type="button" className="h-[19px] w-5 rounded-sm border border-[#999] bg-[#f3f3f3] leading-4 text-[#333]">
              Go
            </button>
          </form>
          {[1, 2, 3, 4, 5, 6, 7, 8, 9].map((n) => (
            <div key={n} className="h-[30px] shrink-0 bg-[#c2d9fb]" />
          ))}
        </aside>
        <main className="flex min-w-0 flex-1 flex-col">
          <nav className="flex h-[30px] shrink-0 items-end gap-4 border-b border-[#98bce2] bg-[#ddedfd] pl-2 text-sm">
            <a href="#open" className="-mb-px flex h-[25px] w-[95px] shrink-0 items-center justify-center border border-b-0 border-[#98bce2] bg-white pb-1 text-[15px] font-bold">
              待解决问题
            </a>
            <a href="#solved" className="h-6 underline underline-offset-2">已解决问题</a>
            <a href="#vote" className="h-6 underline underline-offset-2">投票中</a>
            <a href="#official" className="h-6 underline underline-offset-2">官方精品</a>
          </nav>
          <h2 className="h-12 shrink-0 pt-5 pl-6 leading-5">标题</h2>
          <ul className="ml-[19px] shrink-0">
            {questions.map((q) => (
              <li key={q.title} className="flex h-[34px] items-center border-t border-dotted border-[#bbb] pb-0.5 pl-[7px]">
                <Question />
                <a href="#question" className="ml-2 text-sm text-[#0000cc] [text-spacing-trim:space-all]">{q.title}</a>
                <span className="ml-[9px] flex items-center gap-[5px]">
                  <Coin />
                  <span className="text-[13px] text-[#d9534f]">{q.score}</span>
                </span>
                <span className='ml-2 font-["Liberation_Serif","Noto_Sans_CJK_SC",sans-serif]'>{q.tag}</span>
              </li>
            ))}
          </ul>
          <article className="ml-[19px] flex min-h-0 flex-1 flex-col border-t border-l border-[#b5b5b5] pl-5">
            <p className="mt-2 flex shrink-0 text-[#999] [text-spacing-trim:space-all]">
              提问者：
              <a href="#user" className="text-[#1d3a7a]">小蜜蜂</a>
              <span className="mx-[14px]">|</span>
              悬赏分：10分
              <span className="mx-[14px]">|</span>
              回答次数：
            </p>
            <p className="mt-3 shrink-0 text-sm">
              在广联达中<span className="ml-3">土方大开挖怎么画</span>
            </p>
            <div className="mt-[41px] flex min-h-0 flex-1 flex-col border-t border-l border-[#a5c4e4] bg-[#e4f0fd] pl-2">
              <button type="button" className="flex h-[26px] shrink-0 items-end gap-[5px] pb-0.5 text-[#333]">
                {pictureIcon}
                <span className="leading-4">插入图片</span>
              </button>
              <textarea
                aria-label="回答"
                placeholder="回答即可得2分贡献分，回答被采纳获得系统赠送20分"
                className="min-h-0 flex-1 resize-none overflow-hidden border-t border-l border-[#a5c4e4] bg-white px-[5px] py-[6px] whitespace-pre outline-none placeholder:text-[#bbb]"
              />
            </div>
          </article>
        </main>
      </div>
    </section>
  )
}

/* ---------- Red annotations over both windows ---------- */

const arrows = [
  { from: [416, 152], to: [132, 364] },
  { from: [1249, 394], to: [418, 154] },
  { from: [667, 296], to: [336, 330] },
  { from: [1153, 419], to: [1266, 419] },
]

function Annotations() {
  return (
    <svg viewBox="0 0 1352 590" preserveAspectRatio="none" className="pointer-events-none absolute inset-0 h-full w-full" fill="none" aria-hidden="true">
      <ellipse cx="336" cy="399" rx="85.500" ry="191" stroke="#f00505" strokeWidth="3" />
      {arrows.map(({ from: [x1, y1], to: [x2, y2] }) => {
        const d = Math.hypot(x2 - x1, y2 - y1)
        const ux = (x2 - x1) / d
        const uy = (y2 - y1) / d
        const bx = x2 - ux * 17
        const by = y2 - uy * 17
        return (
          <g key={`${x1}-${y1}`}>
            <path d={`M${x1} ${y1}L${bx} ${by}`} stroke="#f00505" strokeWidth="3" strokeLinecap="round" />
            <polygon points={`${x2},${y2} ${bx - uy * 6},${by + ux * 6} ${bx + uy * 6},${by - ux * 6}`} fill="#f00505" />
          </g>
        )
      })}
    </svg>
  )
}

export default function App() {
  return (
    <div className="relative grid h-screen w-full grid-cols-[949fr_403fr] grid-rows-1 overflow-hidden whitespace-nowrap text-black select-none">
      <Modeller />
      <Browser />
      <Annotations />
    </div>
  )
}
